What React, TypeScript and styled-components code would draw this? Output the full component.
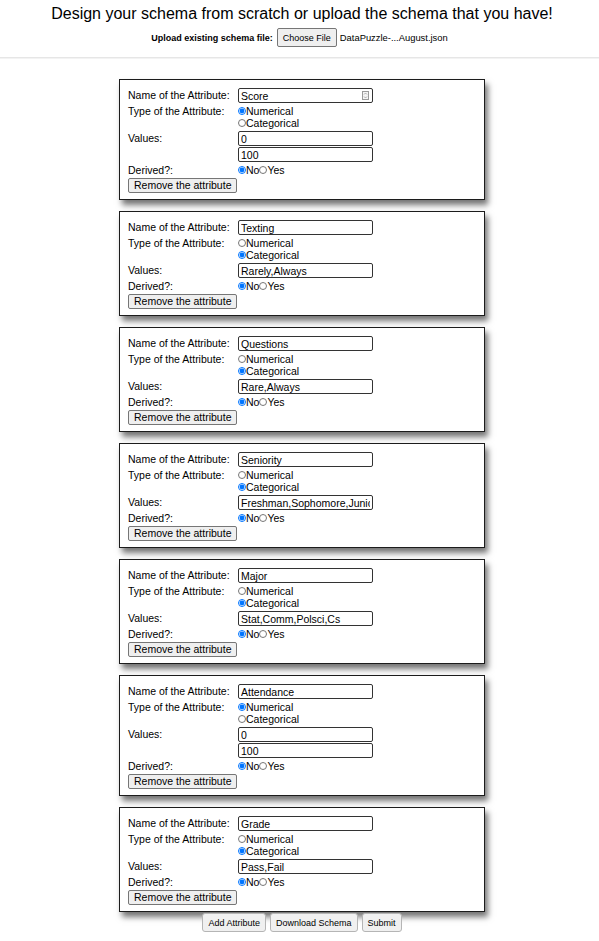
import React from 'react';
import styled, { createGlobalStyle } from 'styled-components';

const GlobalStyle = createGlobalStyle`
  body {
    margin: 0;
    background: #fff;
    color: #000;
    font-family: "Liberation Sans", Arial, sans-serif;
  }
`;

const Header = styled.header`
  padding-top: 4px;
  text-align: center;
`;

const Title = styled.h1`
  margin: 0;
  padding-left: 5px;
  font-size: 16px;
  line-height: 20px;
  font-weight: normal;
`;

const UploadRow = styled.div`
  display: flex;
  justify-content: center;
  align-items: center;
  gap: 4px;
  margin-top: 4px;
  font-size: 9px;
`;

const UploadLabel = styled.span`
  font-weight: bold;
`;

const FileButton = styled.button`
  height: 19px;
  padding: 0 5px;
  font-family: inherit;
  font-size: 9px;
  color: #000;
  background: #efefef;
  border: 1px solid #767676;
  border-radius: 2px;
`;

const FileName = styled.span`
  margin-left: -1px;
  font-size: 9.4px;
`;

const Divider = styled.hr`
  margin: 10px 0 0;
  border: 0;
  border-top: 1px solid #e6e6e6;
  border-bottom: 1px solid #f3f3f3;
`;

const Main = styled.main`
  display: flex;
  flex-direction: column;
  align-items: center;
  padding-left: 5px;
  margin-top: 20px;
`;

const CardList = styled.div`
  display: flex;
  flex-direction: column;
  gap: 11px;
`;

const Card = styled.section`
  width: 366px;
  box-sizing: border-box;
  display: grid;
  grid-template-columns: 110px 135px;
  row-gap: 2px;
  align-items: start;
  padding: 8px 8px 6px;
  background: #fff;
  border: 1px solid #1c1c1c;
  box-shadow: 3px 5px 6px rgba(0, 0, 0, 0.55);
  font-size: 10.5px;
`;

const Label = styled.div<{ $lh: number }>`
  line-height: ${(p) => p.$lh}px;
  white-space: nowrap;
`;

const Field = styled.div`
  position: relative;
`;

const TextInput = styled.input`
  display: block;
  width: 135px;
  height: 15px;
  box-sizing: border-box;
  padding: 0 2px;
  font-family: inherit;
  font-size: 10.5px;
  color: #000;
  border: 1px solid #333;
  border-radius: 2px;
  outline: none;
`;

const FillBadge = styled.span`
  position: absolute;
  right: 4px;
  top: 3px;
  display: flex;
`;

const ValueStack = styled.div`
  display: flex;
  flex-direction: column;
  gap: 1px;
`;

const RadioGroup = styled.div<{ $inline?: boolean }>`
  display: flex;
  flex-direction: ${(p) => (p.$inline ? 'row' : 'column')};
`;

const Option = styled.label`
  display: flex;
  align-items: center;
  height: 12px;
  line-height: 12px;
`;

const Radio = styled.input`
  width: 8px;
  height: 8px;
  margin: 0;
`;

const RemoveButton = styled.button`
  grid-column: 1;
  justify-self: start;
  height: 15px;
  padding: 0 5px;
  font-family: inherit;
  font-size: 10.5px;
  line-height: 13px;
  color: #000;
  background: #efefef;
  border: 1px solid #767676;
  border-radius: 2px;
  white-space: nowrap;
`;

const Actions = styled.div`
  display: flex;
  gap: 4px;
  margin-top: 1px;
`;

const ActionButton = styled.button`
  height: 19px;
  padding: 0 5px;
  font-family: inherit;
  font-size: 9px;
  color: #000;
  background: #f0f0f0;
  border: 1px solid #b5b5b5;
  border-radius: 3px;
`;

type Attr = {
  name: string;
  numerical: boolean;
  values: string[];
  badge?: boolean;
};

const attrs: Attr[] = [
  { name: 'Score', numerical: true, values: ['0', '100'], badge: true },
  { name: 'Texting', numerical: false, values: ['Rarely,Always'] },
  { name: 'Questions', numerical: false, values: ['Rare,Always'] },
  { name: 'Seniority', numerical: false, values: ['Freshman,Sophomore,Junior,Senior'] },
  { name: 'Major', numerical: false, values: ['Stat,Comm,Polsci,Cs'] },
  { name: 'Attendance', numerical: true, values: ['0', '100'] },
  { name: 'Grade', numerical: false, values: ['Pass,Fail'] },
];

function AttributeCard({ attr, index }: { attr: Attr; index: number }) {
  return (
    <Card>
      <Label $lh={15}>Name of the Attribute:</Label>
      <Field>
        <TextInput defaultValue={attr.name} />
        {attr.badge && (
          <FillBadge>
            <svg width="7" height="9" viewBox="0 0 7 9">
              <rect x="0.5" y="0.5" width="6" height="8" fill="#f4f4f4" stroke="#9a9a9a" />
              <path d="M2 3.5 L3.5 2 L5 3.5 M2 5.5 L3.5 7 L5 5.5" fill="none" stroke="#9a9a9a" strokeWidth="0.8" />
            </svg>
          </FillBadge>
        )}
      </Field>

      <Label $lh={12}>Type of the Attribute:</Label>
      <RadioGroup>
        <Option>
          <Radio type="radio" name={`type-${index}`} defaultChecked={attr.numerical} />
          Numerical
        </Option>
        <Option>
          <Radio type="radio" name={`type-${index}`} defaultChecked={!attr.numerical} />
          Categorical
        </Option>
      </RadioGroup>

      <Label $lh={15}>Values:</Label>
      <ValueStack>
        {attr.values.map((v, i) => (
          <TextInput key={i} defaultValue={v} />
        ))}
      </ValueStack>

      <Label $lh={12}>Derived?:</Label>
      <RadioGroup $inline>
        <Option>
          <Radio type="radio" name={`derived-${index}`} defaultChecked />
          No
        </Option>
        <Option>
          <Radio type="radio" name={`derived-${index}`} />
          Yes
        </Option>
      </RadioGroup>

      <RemoveButton>Remove the attribute</RemoveButton>
    </Card>
  );
}

export default function App() {
  return (
    <>
      <GlobalStyle />
      <Header>
        <Title>Design your schema from scratch or upload the schema that you have!</Title>
        <UploadRow>
          <UploadLabel>Upload existing schema file:</UploadLabel>
          <FileButton>Choose File</FileButton>
          <FileName>DataPuzzle-...August.json</FileName>
        </UploadRow>
      </Header>
      <Divider />
      <Main>
        <CardList>
          {attrs.map((a, i) => (
            <AttributeCard key={a.name} attr={a} index={i} />
          ))}
        </CardList>
        <Actions>
          <ActionButton>Add Attribute</ActionButton>
          <ActionButton>Download Schema</ActionButton>
          <ActionButton>Submit</ActionButton>
        </Actions>
      </Main>
    </>
  );
}
